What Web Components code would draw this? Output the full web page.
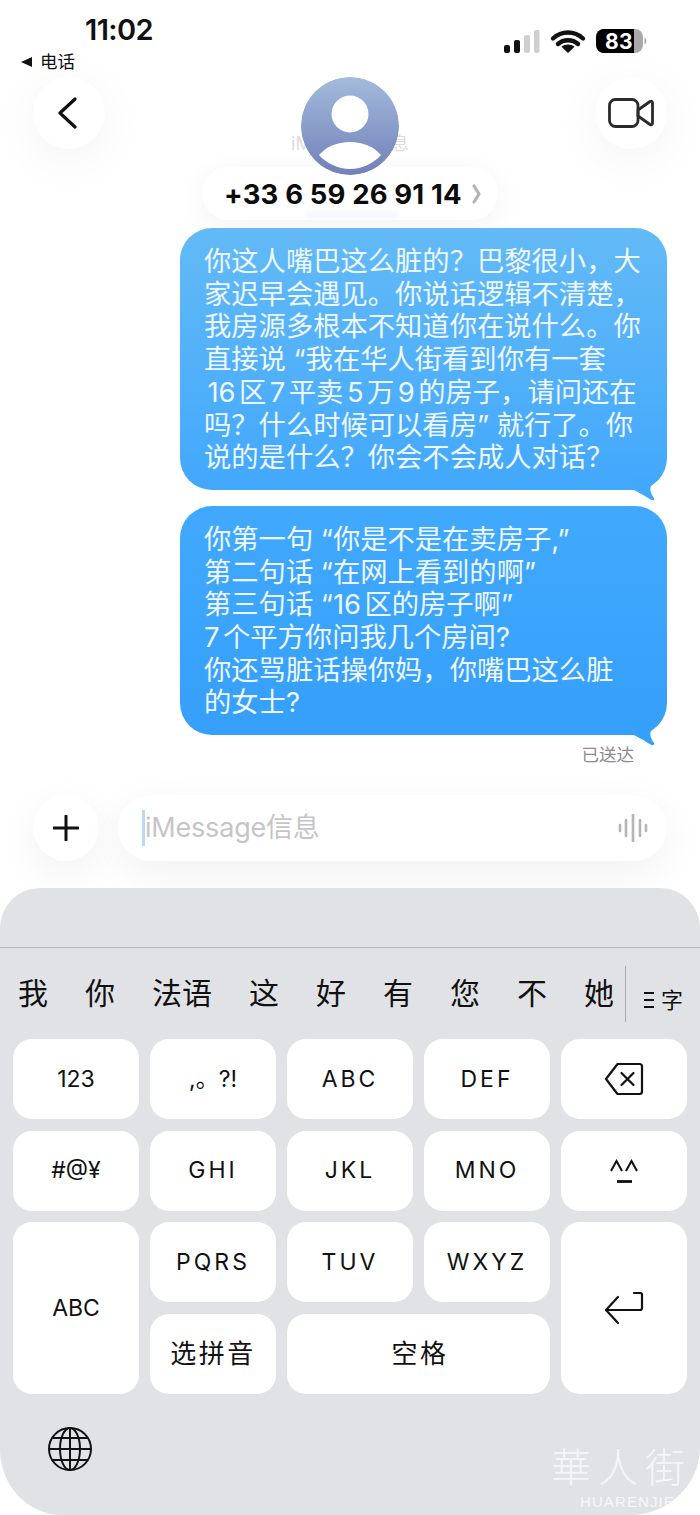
<!doctype html>
<html lang="zh-Hans">
<head>
<meta charset="utf-8">
<title>iMessage</title>
<style>
  html, body { margin: 0; background: #fff; }
  body { width: 700px; height: 1515px; overflow: hidden; font-family: Inter, "Noto Sans CJK SC", sans-serif; }
</style>
</head>
<body>
<sms-status-bar time="11:02" back="电话" battery="83"></sms-status-bar>
<sms-nav number="+33 6 59 26 91 14" ghost="iMessage信息"></sms-nav>
<sms-thread>
  <sms-bubble>你这人嘴巴这么脏的？巴黎很小，大<br>家迟早会遇见。你说话逻辑不清楚，<br>我房源多根本不知道你在说什么。你<br>直接说 “我在华人街看到你有一套<br><span class="n">16</span>区<span class="n">7</span>平卖<span class="n">5</span>万<span class="n">9</span>的房子，请问还在<br>吗？什么时候可以看房” 就行了。你<br>说的是什么？你会不会成人对话？</sms-bubble>
  <sms-bubble tail="#359ffa" second>你第一句 “你是不是在卖房子,”<br>第二句话 “在网上看到的啊”<br>第三句话 “<span class="r">16</span>区的房子啊”<br><span class="r">7</span>个平方你问我几个房间?<br>你还骂脏话操你妈，你嘴巴这么脏<br>的女士?</sms-bubble>
  <sms-receipt>已送达</sms-receipt>
</sms-thread>
<sms-input placeholder="iMessage信息"></sms-input>
<ime-keyboard>
  <ime-key>123</ime-key>
  <ime-key>,。?!</ime-key>
  <ime-key spaced>ABC</ime-key>
  <ime-key spaced>DEF</ime-key>
  <ime-key><svg width="40" height="34" viewBox="0 0 40 34" fill="none" stroke="#111" stroke-width="2.200" stroke-linejoin="round" stroke-linecap="round"><path d="M13.500 2h22a2.500 2.500 0 0 1 2.500 2.500v25a2.500 2.500 0 0 1-2.500 2.500h-22L2 17z"/><path d="M17.500 11l12 12M29.500 11l-12 12"/></svg></ime-key>
  <ime-key>#@¥</ime-key>
  <ime-key spaced>GHI</ime-key>
  <ime-key spaced>JKL</ime-key>
  <ime-key spaced>MNO</ime-key>
  <ime-key><svg width="30" height="24" viewBox="0 0 30 24" fill="none" stroke="#111" stroke-width="2"><path d="M2 12L7.500 2l5.500 10M17 12l5.500-10L28 12"/><path d="M8 22.500h15" stroke-width="2.800"/></svg></ime-key>
  <ime-key tall>ABC</ime-key>
  <ime-key spaced>PQRS</ime-key>
  <ime-key spaced>TUV</ime-key>
  <ime-key spaced>WXYZ</ime-key>
  <ime-key tall><svg width="40" height="34" viewBox="0 0 40 34" fill="none" stroke="#111" stroke-width="2.200" stroke-linecap="round" stroke-linejoin="round"><path d="M30 2h6.500a1.500 1.500 0 0 1 1.500 1.500V17a2 2 0 0 1-2 2H2"/><path d="M14 6L2 19l12 13"/></svg></ime-key>
  <ime-key cjk>选拼音</ime-key>
  <ime-key cjk wide>空格</ime-key>
</ime-keyboard>
<script>
function define(tag, css, html, setup) {
  customElements.define(tag, class extends HTMLElement {
    constructor() {
      super()
      this.attachShadow({ mode: 'open' })
      this.shadowRoot.innerHTML = `<style>${css}</style>${html}`
    }
    connectedCallback() { if (setup) setup(this, this.shadowRoot) }
  })
}

const STACK = 'Inter, "Noto Sans CJK SC", sans-serif'

define('sms-status-bar', `
  :host { display: block; height: 77px; position: relative; box-sizing: border-box; padding: 12px 21px 0; font-family: ${STACK}; color: #111; }
  .time { font-size: 29px; line-height: 36px; font-weight: 600; margin-left: 64px; letter-spacing: -.6px; }
  .back { display: flex; align-items: center; gap: 8px; margin-top: 2px; font-size: 17.500px; line-height: 24px; }
  .back i { width: 0; height: 0; border: 5px solid transparent; border-left: 0; border-right: 11px solid #111; }
  .right { position: absolute; left: 504px; top: 29px; }
  .right svg { display: block; }
  .pct { font: 700 21px ${STACK}; fill: #fff; letter-spacing: .5px; }
`, `
  <div class="time"></div>
  <div class="back"><i></i><span class="lbl"></span></div>
  <div class="right">
    <svg width="146" height="25" viewBox="0 0 146 25">
      <rect x="0" y="16" width="6" height="8" rx="2" fill="#111"/>
      <rect x="10" y="11" width="6" height="13" rx="2" fill="#111"/>
      <rect x="20" y="6" width="6" height="18" rx="2" fill="#cfcfcf"/>
      <rect x="30" y="1" width="5.500" height="23" rx="2" fill="#cfcfcf"/>
      <path d="M49 9.500C57.500 1.500 70.500 1.500 79 9.500M54 15c5.500-5 14.500-5 20 0" fill="none" stroke="#111" stroke-width="4.400" stroke-linecap="round"/>
      <path d="M64 24l-6.500-6.200c3.700-3 9.300-3 13 0z" fill="#111"/>
      <rect x="92" y="0" width="47" height="24" rx="8" fill="#a9a9a9"/>
      <path d="M100 0h30v24h-30a8 8 0 0 1-8-8V8a8 8 0 0 1 8-8z" fill="#000"/>
      <path d="M140.500 8.500c2.500 .6 2.500 6.400 0 7z" fill="#a9a9a9"/>
      <text class="pct" x="115" y="19.500" text-anchor="middle"></text>
    </svg>
  </div>
`, (el, root) => {
  root.querySelector('.time').textContent = el.getAttribute('time')
  root.querySelector('.lbl').textContent = el.getAttribute('back')
  root.querySelector('.pct').textContent = el.getAttribute('battery')
})

define('sms-nav', `
  :host { display: grid; grid-template-columns: 72px 1fr 72px; height: 143px; padding: 0 33px; font-family: ${STACK}; position: relative; }
  .round { width: 72px; height: 72px; border-radius: 50%; background: #fff; box-shadow: 0 10px 50px rgba(0,0,0,.05); display: flex; align-items: center; justify-content: center; }
  .back { padding-right: 5px; box-sizing: border-box; }
  .mid { display: flex; flex-direction: column; align-items: center; position: relative; }
  .ghost { position: absolute; top: 52px; left: 0; right: 0; text-align: center; font-size: 18px; color: #dcdcde; }
  .avatar { width: 98px; height: 98px; border-radius: 50%; display: block; position: relative; z-index: 1; flex: none; }
  .pill { position: relative; margin-top: -8px; width: 296px; height: 53px; box-sizing: border-box; border-radius: 27px; background: #fff; box-shadow: 0 6px 30px rgba(0,0,0,.05); display: flex; align-items: center; justify-content: space-between; padding: 0 17px 0 22px; }
  .pill::after { content: ""; position: absolute; left: 104px; bottom: 1px; width: 92px; height: 8px; background: #f4f7fb; filter: blur(2px); }
  .num { font-size: 27.500px; font-weight: 700; color: #0c0c0c; letter-spacing: .15px; white-space: nowrap; position: relative; z-index: 1; }
`, `
  <div class="round back"><svg width="20" height="32" viewBox="0 0 20 32" fill="none" stroke="#111" stroke-width="3.200" stroke-linecap="round" stroke-linejoin="round"><path d="M18 2L3 16l15 14"/></svg></div>
  <div class="mid">
    <div class="ghost"></div>
    <svg class="avatar" viewBox="0 0 98 98">
      <defs><linearGradient id="a" x1="0" y1="0" x2="0" y2="1"><stop offset="0" stop-color="#a3bbdd"/><stop offset="1" stop-color="#7180b8"/></linearGradient></defs>
      <circle cx="49" cy="49" r="49" fill="url(#a)"/>
      <circle cx="49" cy="37" r="18.500" fill="#fff"/>
      <path d="M18 78C25 70 36 65 49 65s24 5 31 13c-7 8-19 14-31 14S25 86 18 78z" fill="#fff"/>
    </svg>
    <div class="pill">
      <span class="num"></span>
      <svg width="9" height="20" viewBox="0 0 9 20" fill="none" stroke="#b4b4b6" stroke-width="3.200" stroke-linecap="round" stroke-linejoin="round"><path d="M2 2l5 8-5 8"/></svg>
    </div>
  </div>
  <div class="round"><svg width="46" height="30" viewBox="0 0 46 30" fill="none" stroke="#2a2a2c" stroke-width="2.800" stroke-linejoin="round"><rect x="1.500" y="1.500" width="28.500" height="27" rx="6"/><path d="M30 12l12-8.500c1.500-.8 2.500 0 2.500 1.500v20c0 1.500-1 2.300-2.500 1.500L30 18z"/></svg></div>
`, (el, root) => {
  root.querySelector('.num').textContent = el.getAttribute('number')
  root.querySelector('.ghost').textContent = el.getAttribute('ghost')
})

define('sms-thread', `
  :host { display: flex; flex-direction: column; align-items: flex-end; gap: 16px; padding: 8px 33px 0 0; height: 575px; box-sizing: border-box; }
`, `<slot></slot>`)

define('sms-bubble', `
  :host { display: block; width: 487px; box-sizing: border-box; position: relative; padding: 18px 24px 15px; border-radius: 32px; background: linear-gradient(#63baf6, #42a8fc); color: #eef7ff; font: 400 27.300px/32.700px ${STACK}; text-autospace: no-autospace; }
  :host([second]) { background: linear-gradient(#41a9fd, #359ffa); }
  ::slotted(.n) { margin: 0 3.500px; }
  ::slotted(.r) { margin-right: 3.500px; }
  svg { position: absolute; right: 0; bottom: -15px; display: block; }
`, `
  <slot></slot>
  <svg width="40" height="30" viewBox="-40 -15 40 30"><path class="tail" d="M-36-1C-30 1-24 5-19 8-16 10.500-12 11-13 8-15 5-18 0-16-4-13-9-8-12-4-18L-30-20Z"/></svg>
`, (el, root) => { root.querySelector('.tail').setAttribute('fill', el.getAttribute('tail') || '#42a8fc') })

define('sms-receipt', `
  :host { display: block; margin: -8px 33px 0 0; font: 400 17.500px/24px ${STACK}; color: #8b8b8e; }
`, `<slot></slot>`)

define('sms-input', `
  :host { display: flex; gap: 19px; padding: 0 33px; height: 93px; font-family: ${STACK}; }
  .plus, .field { height: 66px; background: #fff; box-shadow: 0 12px 40px rgba(0,0,0,.06); }
  .plus { width: 66px; border-radius: 50%; display: flex; align-items: center; justify-content: center; flex: none; }
  .field { flex: 1; border-radius: 33px; display: flex; align-items: center; padding: 0 19px 0 24px; }
  .caret { width: 3px; height: 36px; background: #b9d9f7; flex: none; }
  .ph { flex: 1; font-size: 27px; line-height: 36px; color: #c5c5c8; letter-spacing: -.2px; }
`, `
  <div class="plus"><svg width="26" height="26" viewBox="0 0 26 26" stroke="#111" stroke-width="3" stroke-linecap="round"><path d="M13 1v24M1 13h24"/></svg></div>
  <div class="field">
    <span class="caret"></span><span class="ph"></span>
    <svg width="30" height="28" viewBox="0 0 30 28" stroke="#b4b4b6" stroke-width="2.600" stroke-linecap="round"><path d="M2 11v6M8 6v16M15 1v26M22 6v16M28 11v6"/></svg>
  </div>
`, (el, root) => { root.querySelector('.ph').textContent = el.getAttribute('placeholder') })

define('ime-keyboard', `
  :host { display: block; height: 627px; box-sizing: border-box; background: #e1e2e6; border-radius: 40px 40px 70px 62px / 40px 40px 68px 66px; position: relative; overflow: hidden; font-family: ${STACK}; color: #111; }
  .top { height: 60px; border-bottom: 1px solid #b7b8bb; box-sizing: border-box; }
  .cands { height: 91px; box-sizing: border-box; padding: 0 0 2px 18px; display: flex; align-items: center; position: relative; gap: 37px; font-size: 30px; line-height: 40px; }
  .sep { position: absolute; left: 625px; top: 18px; height: 56px; width: 1px; background: #a9aaad; }
  .more { position: absolute; left: 644px; top: 41px; display: flex; align-items: center; gap: 7px; font-size: 22px; line-height: 22px; }
  .grid { display: grid; grid-template-columns: repeat(5, 126px); grid-auto-rows: 80px; gap: 11.670px 11px; padding: 0 13px; }
  .globe { display: block; margin: 33px 0 0 48px; }
  .mark { position: absolute; left: 551px; top: 555px; color: rgba(255,255,255,.7); font-size: 40px; line-height: 44px; letter-spacing: 7px; font-family: "Noto Sans CJK TC", sans-serif; font-weight: 300; white-space: nowrap; }
  .brand { position: absolute; left: 580px; top: 606px; color: rgba(255,255,255,.75); font: 400 15px/16px "Liberation Sans", sans-serif; letter-spacing: 1.100px; }
`, `
  <div class="top"></div>
  <div class="cands">
    <span>我</span><span>你</span><span>法语</span><span>这</span><span>好</span><span>有</span><span>您</span><span>不</span><span>她</span>
    <div class="sep"></div>
    <div class="more"><svg width="10" height="18" viewBox="0 0 10 18" stroke="#111" stroke-width="1.800"><path d="M0 2h10M0 9h10M0 16h10"/></svg><span>字</span></div>
  </div>
  <div class="grid"><slot></slot></div>
  <svg class="globe" width="44" height="44" viewBox="0 0 44 44" fill="none" stroke="#111" stroke-width="2"><circle cx="22" cy="22" r="21"/><ellipse cx="22" cy="22" rx="10" ry="21"/><path d="M22 1v42M1 22h42M4.500 11h35M4.500 33h35"/></svg>
  <div class="mark">華人街</div>
  <div class="brand">HUARENJIE</div>
`)

define('ime-key', `
  :host { display: flex; align-items: center; justify-content: center; background: #fff; border-radius: 19px; font: 400 23px/1 ${STACK}; color: #111; }
  :host([spaced]) { letter-spacing: 3px; }
  :host([cjk]) { font-size: 26px; letter-spacing: 2.500px; }
  :host([tall]) { grid-row: span 2; }
  :host([wide]) { grid-column: span 2; padding-left: 3px; }
  ::slotted(svg) { display: block; }
`, `<slot></slot>`)
</script>
</body>
</html>
